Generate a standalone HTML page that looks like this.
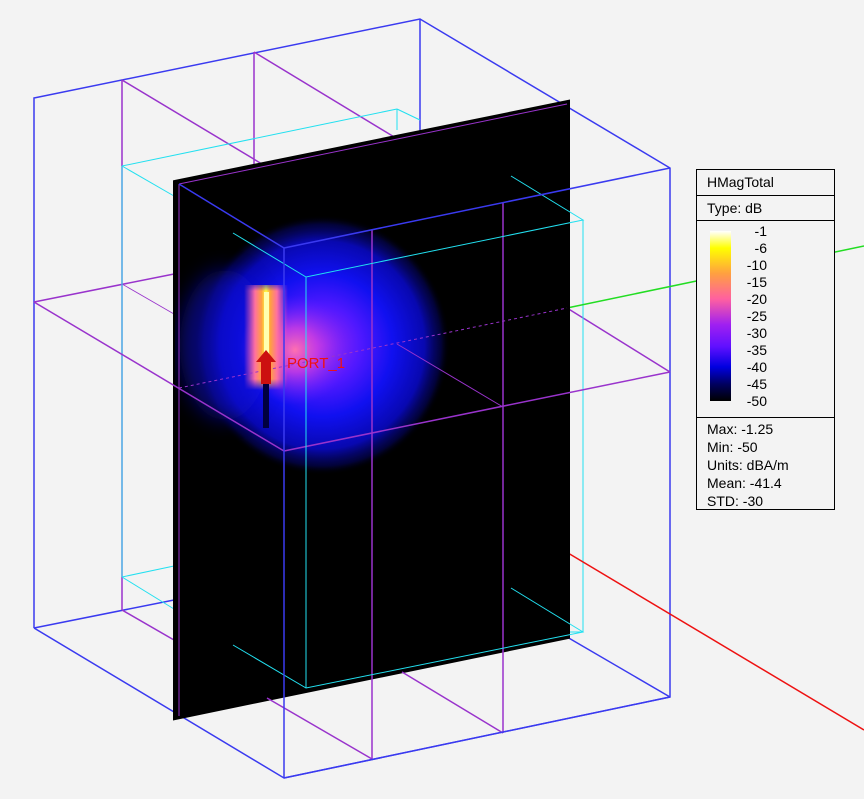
<!DOCTYPE html>
<html><head><meta charset="utf-8"><style>
html,body{margin:0;padding:0;background:#f3f3f3;width:864px;height:799px;overflow:hidden;font-family:"Liberation Sans",sans-serif}
#leg{position:absolute;left:696px;top:169px;width:137px;height:339px;border:1px solid #000;background:#f3f3f3;font-size:14px;color:#000}
.row{border-bottom:1px solid #000;padding-left:10px;box-sizing:border-box}
</style></head><body>
<svg width="864" height="799" style="position:absolute;left:0;top:0">
<defs>
<radialGradient id="g1" cx="0.5" cy="0.5" r="0.5">
<stop offset="0" stop-color="#a028f0"/><stop offset="0.3" stop-color="#5018ff"/><stop offset="0.55" stop-color="#1010f0"/><stop offset="0.8" stop-color="#0808b0"/><stop offset="0.93" stop-color="#040460" stop-opacity="0.6"/><stop offset="1" stop-color="#000" stop-opacity="0"/>
</radialGradient>
<radialGradient id="g2" cx="0.5" cy="0.5" r="0.5">
<stop offset="0" stop-color="#ff70b0"/><stop offset="0.4" stop-color="#d040e0" stop-opacity="0.8"/><stop offset="1" stop-color="#6020ff" stop-opacity="0"/>
</radialGradient>
<linearGradient id="bar" x1="0" x2="1"><stop offset="0" stop-color="#ff60a0" stop-opacity="0"/><stop offset="0.25" stop-color="#ff70a0"/><stop offset="0.4" stop-color="#ffa040"/><stop offset="0.5" stop-color="#ffff40"/><stop offset="0.6" stop-color="#ffa040"/><stop offset="0.75" stop-color="#ff70a0"/><stop offset="1" stop-color="#ff60a0" stop-opacity="0"/></linearGradient>
<linearGradient id="barv" x1="0" y1="0" x2="0" y2="1"><stop offset="0" stop-color="#fff" stop-opacity="0"/><stop offset="0.1" stop-color="#fff" stop-opacity="1"/><stop offset="0.9" stop-color="#fff" stop-opacity="1"/><stop offset="1" stop-color="#fff" stop-opacity="0"/></linearGradient>
<mask id="bm"><rect x="240" y="280" width="50" height="110" fill="url(#barv)"/></mask>
<clipPath id="pc"><polygon points="175,182 568,102 568,637 175,718"/></clipPath>
<filter id="bl" x="-50%" y="-50%" width="200%" height="200%"><feGaussianBlur stdDeviation="10"/></filter>
</defs>
<g fill="none" stroke-width="1.5">
<g stroke="#3a3af0">
<polyline points="34,628 34,98 420,19 670,168 670,697 284,778 34,628"/>
<line x1="420" y1="19" x2="420" y2="131"/><line x1="34" y1="628" x2="174" y2="600"/><line x1="670" y1="697" x2="567" y2="637"/>
</g>
<g stroke="#9933cc">
<line x1="122" y1="80" x2="122" y2="610"/><line x1="254" y1="52" x2="254" y2="166"/>
<line x1="34" y1="302" x2="174" y2="274"/><line x1="122" y1="80" x2="372" y2="230"/><line x1="254" y1="52" x2="503" y2="203"/>
<line x1="567" y1="308" x2="670" y2="372"/><line x1="122" y1="610" x2="174" y2="640"/>
<line x1="122" y1="284" x2="174" y2="314" stroke-width="0.8"/>
</g>
<g stroke="#22e0f0" stroke-width="1">
<line x1="122" y1="166" x2="397" y2="109"/><line x1="397" y1="109" x2="420" y2="120"/><line x1="122" y1="166" x2="174" y2="196"/>
<line x1="122" y1="166" x2="122" y2="577"/><line x1="122" y1="577" x2="174" y2="566"/><line x1="122" y1="577" x2="174" y2="609"/>
<line x1="397" y1="109" x2="397" y2="130"/><line x1="583" y1="220" x2="583" y2="632"/><line x1="568" y1="632" x2="583" y2="632"/>
</g>
<line x1="567" y1="308" x2="864" y2="246" stroke="#22dd22"/>
<line x1="568" y1="553" x2="864" y2="730" stroke="#ee1111"/>
</g>
<polygon points="175,182 568,102 568,637 175,718" fill="#000" stroke="#000" stroke-width="4"/>
<g clip-path="url(#pc)">
<ellipse cx="322" cy="345" rx="128" ry="130" fill="url(#g1)"/>
<ellipse cx="225" cy="345" rx="45" ry="75" fill="#1010e0" opacity="0.5" filter="url(#bl)"/>
<ellipse cx="295" cy="350" rx="55" ry="55" fill="url(#g2)"/>
<rect x="244" y="285" width="44" height="105" fill="url(#bar)" mask="url(#bm)"/>
<rect x="264" y="292" width="5" height="62" fill="#ffffb0"/>
<rect x="263" y="383" width="6" height="45" fill="#000040"/>
</g>
<g fill="none" stroke-width="1.5">
<line x1="179" y1="184" x2="567" y2="104" stroke="#9933cc" stroke-width="1"/>
<line x1="179" y1="184" x2="179" y2="716" stroke="#9933cc" stroke-width="1"/>
<g stroke="#9933cc">
<line x1="372" y1="230" x2="372" y2="759"/><line x1="503" y1="203" x2="503" y2="733"/>
<line x1="34" y1="302" x2="284" y2="451"/><line x1="284" y1="451" x2="670" y2="372"/>
<line x1="267" y1="698" x2="372" y2="759"/><line x1="402" y1="672" x2="503" y2="733"/>
<line x1="179" y1="388" x2="567" y2="308" stroke-width="1" stroke-dasharray="3,3"/>
<line x1="397" y1="344" x2="503" y2="407" stroke-width="1"/>
</g>
<g stroke="#22e0f0" stroke-width="1">
<polyline points="233,233 306,277 583,220 511,176"/>
<line x1="306" y1="277" x2="306" y2="688"/>
<polyline points="233,645 306,688 583,632 511,588"/>
</g>
<g stroke="#3a3af0">
<line x1="179" y1="184" x2="284" y2="248"/><line x1="284" y1="248" x2="670" y2="168"/>
<line x1="284" y1="248" x2="284" y2="778"/><line x1="284" y1="778" x2="670" y2="697"/>
</g>
</g>
<polygon points="266,350 276,362 271,362 271,384 261,384 261,362 256,362" fill="#cc1010"/>
<text x="287" y="368" font-family="Liberation Sans" font-size="15" fill="#ee1111">PORT_1</text>
</svg>
<div id="leg">
<div class="row" style="height:26px;line-height:24px">HMagTotal</div>
<div class="row" style="height:25px;line-height:24px">Type: dB</div>
<div class="row" style="height:197px;position:relative">
<div style="position:absolute;left:13px;top:10px;width:21px;height:170px;background:linear-gradient(#fff,#ff0 10%,#ffa040 25%,#ff60a0 40%,#a020f0 55%,#6010ff 68%,#0000e0 80%,#000060 90%,#000)"></div>
<div style="position:absolute;left:40px;top:2px;width:30px;text-align:right;line-height:17px">-1<br>-6<br>-10<br>-15<br>-20<br>-25<br>-30<br>-35<br>-40<br>-45<br>-50</div>
</div>
<div style="padding-left:10px;padding-top:2px;line-height:18px">Max: -1.25<br>Min: -50<br>Units: dBA/m<br>Mean: -41.4<br>STD: -30</div>
</div>
</body></html>
